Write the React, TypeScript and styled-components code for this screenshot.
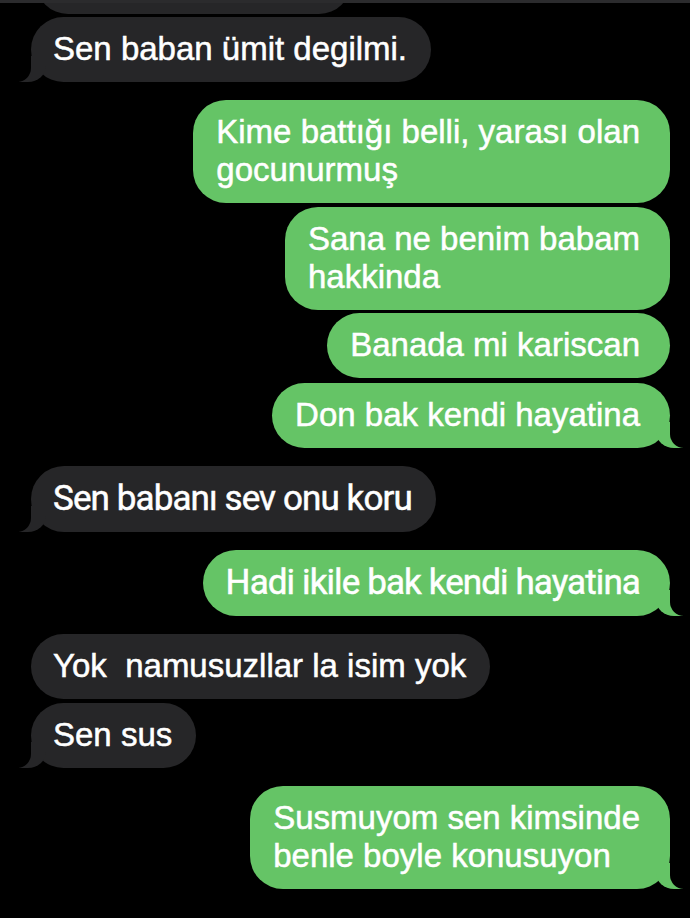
import React from 'react'
import styled, { createGlobalStyle, css } from 'styled-components'

const GlobalStyle = createGlobalStyle`
  html, body {
    margin: 0;
    padding: 0;
    background: #000;
  }
`

type Message = {
  id: number
  mine: boolean
  lines: string[]
  tail?: boolean
  condensed?: boolean
  gap: number
}

const messages: Message[] = [
  { id: 1, mine: false, lines: ['Sen baban ümit degilmi.'], tail: true, gap: 3 },
  { id: 2, mine: true, lines: ['Kime battığı belli, yarası olan', 'gocunurmuş'], gap: 18 },
  { id: 3, mine: true, lines: ['Sana ne benim babam', 'hakkinda'], gap: 4 },
  { id: 4, mine: true, lines: ['Banada mi kariscan'], gap: 3 },
  { id: 5, mine: true, lines: ['Don bak kendi hayatina'], tail: true, gap: 5 },
  { id: 6, mine: false, lines: ['Sen babanı sev onu koru'], tail: true, condensed: true, gap: 18 },
  { id: 7, mine: true, lines: ['Hadi ikile bak kendi hayatina'], tail: true, condensed: true, gap: 18 },
  { id: 8, mine: false, lines: ['Yok  namusuzllar la isim yok'], gap: 18 },
  { id: 9, mine: false, lines: ['Sen sus'], tail: true, gap: 4 },
  { id: 10, mine: true, lines: ['Susmuyom sen kimsinde', 'benle boyle konusuyon'], tail: true, gap: 18 },
]

const App: React.FC = () => {
  return (
    <>
      <GlobalStyle />
      <Screen>
        <TopEdge />
        <Thread>
          <Row $mine={false} $gap={0}>
            <CutBubble />
          </Row>
          {messages.map((m) => (
            <Row key={m.id} $mine={m.mine} $gap={m.gap}>
              <Bubble $mine={m.mine} $tail={!!m.tail} $condensed={!!m.condensed}>
                {m.lines.map((line, i) => (
                  <Line key={i}>{line}</Line>
                ))}
              </Bubble>
            </Row>
          ))}
        </Thread>
      </Screen>
    </>
  )
}

export default App

const Screen = styled.div`
  position: relative;
  width: 690px;
  height: 918px;
  overflow: hidden;
  background: #000;
  font-family: 'Liberation Sans', Arial, sans-serif;
`

const TopEdge = styled.div`
  position: absolute;
  top: 0;
  left: 0;
  right: 0;
  height: 3px;
  background: #2b2b2d;
  z-index: 2;
`

const Thread = styled.div`
  display: flex;
  flex-direction: column;
  padding: 0 20px 0 31px;
  margin-top: -51px;
`

const Row = styled.div<{ $mine: boolean; $gap: number }>`
  display: flex;
  justify-content: ${(p) => (p.$mine ? 'flex-end' : 'flex-start')};
  margin-top: ${(p) => p.$gap}px;
`

const CutBubble = styled.div`
  width: 315px;
  height: 65px;
  margin-left: 5px;
  border-radius: 32px;
  background: #262628;
`

const tailLeft = css`
  &::before,
  &::after {
    content: '';
    position: absolute;
    bottom: 0;
    height: 26px;
  }
  &::before {
    left: -12px;
    width: 27px;
    background: #262628;
    border-bottom-right-radius: 18px 16px;
  }
  &::after {
    left: -32px;
    width: 32px;
    background: #000;
    border-bottom-right-radius: 14px;
  }
`

const tailRight = css`
  &::before,
  &::after {
    content: '';
    position: absolute;
    bottom: 0;
    height: 26px;
  }
  &::before {
    right: -13px;
    width: 27px;
    background: #65c466;
    border-bottom-left-radius: 18px 16px;
  }
  &::after {
    right: -32px;
    width: 32px;
    background: #000;
    border-bottom-left-radius: 14px;
  }
`

const Bubble = styled.div<{ $mine: boolean; $tail: boolean; $condensed: boolean }>`
  position: relative;
  display: flex;
  flex-direction: column;
  padding: ${(p) => (p.$mine ? '13px 30px 14px 23px' : '13px 24px 14px 22px')};
  border-radius: 33px;
  background: ${(p) => (p.$mine ? '#65c466' : '#262628')};
  color: #fff;
  font-size: 33px;
  letter-spacing: 0;
  line-height: 38px;
  white-space: pre;
  -webkit-text-stroke: 0.5px #fff;

  ${(p) =>
    p.$condensed &&
    css`
      font-family: Roboto, 'Liberation Sans', sans-serif;
      font-size: 35px;
      letter-spacing: -0.9px;
      padding-top: 14px;
    `}

  ${(p) => p.$tail && (p.$mine ? tailRight : tailLeft)}
`

const Line = styled.span`
  display: block;
  position: relative;
  z-index: 1;
`
